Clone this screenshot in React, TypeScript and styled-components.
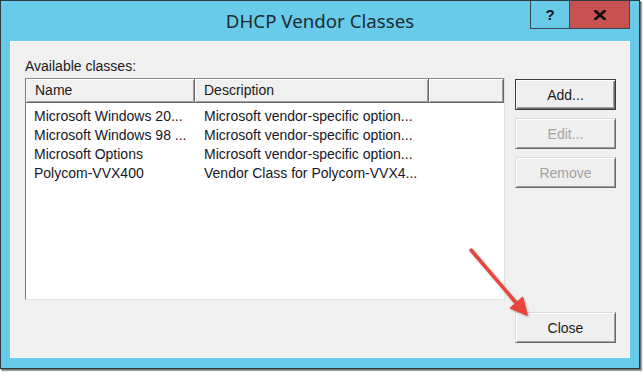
import React from "react";
import styled, { createGlobalStyle } from "styled-components";

const Global = createGlobalStyle`
  html, body { margin: 0; padding: 0; background: #ffffff; }
  body { font-family: "Liberation Sans", Arial, sans-serif; }
`;

const Page = styled.div`
  position: relative;
  width: 644px;
  height: 372px;
  overflow: hidden;
  background: #ffffff;
`;

const Window = styled.div`
  box-sizing: border-box;
  width: 640px;
  height: 369px;
  border: 1px solid #2e3b40;
  box-shadow: 1px 1px 0 #6f6f6f, 2px 2px 1px rgba(0, 0, 0, 0.35);
  background: #68cbe9;
  padding: 0 9px 10px 9px;
  display: flex;
  flex-direction: column;
`;

const TitleBar = styled.div`
  height: 40px;
  display: grid;
  grid-template-columns: 1fr auto 1fr;
  align-items: start;
`;

const Title = styled.div`
  grid-column: 2;
  margin-top: 7px;
  font-family: "Noto Sans", "Segoe UI", sans-serif;
  font-size: 18.7px;
  line-height: 25px;
  color: #1c2b31;
  white-space: nowrap;
`;

const CaptionButtons = styled.div`
  grid-column: 3;
  justify-self: end;
  display: flex;
  margin-top: -1px;
`;

const CaptionButton = styled.div<{ $close?: boolean }>`
  box-sizing: border-box;
  width: ${(p) => (p.$close ? "60px" : "40px")};
  height: 29px;
  background: ${(p) => (p.$close ? "#c75050" : "#68cbe9")};
  border: 1px solid #3a4a50;
  border-left-width: ${(p) => (p.$close ? "0" : "1px")};
  border-top-color: #2e3b40;
  display: flex;
  align-items: center;
  justify-content: center;
  font-family: "Liberation Sans", Arial, sans-serif;
  font-weight: bold;
  font-size: 15px;
  color: #111;
`;

const Client = styled.div`
  box-sizing: border-box;
  height: 317px;
  background: #f0f0f0;
  border: 1px solid #fafafa;
  padding: 16px 13px 14px 14px;
  display: grid;
  grid-template-columns: 480px 101px;
  grid-template-rows: 16px 1fr;
  column-gap: 10px;
  row-gap: 4px;
`;

const Label = styled.div`
  grid-column: 1 / span 2;
  font-size: 14px;
  line-height: 16px;
  color: #1a1a1a;
`;

const ListView = styled.div`
  box-sizing: border-box;
  height: 222px;
  background: #ffffff;
  border-style: solid;
  border-width: 1px;
  border-color: #8a8a8a #e3e3e3 #e3e3e3 #7a7a7a;
  overflow: hidden;
`;

const HeaderRow = styled.div`
  display: flex;
  height: 24px;
`;

const HeaderCell = styled.div<{ $w?: number }>`
  box-sizing: border-box;
  ${(p) => (p.$w ? `width: ${p.$w}px;` : "flex: 1;")}
  height: 24px;
  background: #f0f0f0;
  border-right: 1px solid #696969;
  border-bottom: 1px solid #696969;
  box-shadow: inset 1px 1px 0 #ffffff, inset -1px -1px 0 #a0a0a0;
  padding: 3px 0 0 9px;
  font-size: 14px;
  line-height: 17px;
  color: #1a1a1a;
  white-space: nowrap;
  overflow: hidden;
`;

const Rows = styled.div`
  padding-top: 4px;
`;

const Row = styled.div`
  display: flex;
  height: 19px;
  font-size: 14px;
  line-height: 19px;
  color: #161626;
  white-space: nowrap;
`;

const Cell = styled.div<{ $w: number; $pad: number }>`
  box-sizing: border-box;
  width: ${(p) => p.$w}px;
  padding-left: ${(p) => p.$pad}px;
  overflow: hidden;
`;

const ButtonColumn = styled.div`
  display: flex;
  flex-direction: column;
  gap: 8px;
  padding-top: 1px;
`;

const Button = styled.div<{ $default?: boolean; $disabled?: boolean }>`
  box-sizing: border-box;
  height: 31px;
  width: 101px;
  background: #efefef;
  border: 1px solid ${(p) => (p.$default ? "#3c3c3c" : "#dcdcdc")};
  border-right-color: ${(p) => (p.$default ? "#3c3c3c" : "#696969")};
  border-bottom-color: ${(p) => (p.$default ? "#3c3c3c" : "#696969")};
  box-shadow: ${(p) =>
    p.$default
      ? "inset 1px 1px 0 #ffffff, inset -1px -1px 0 #696969, inset -2px -2px 0 #a0a0a0"
      : "inset 1px 1px 0 #ffffff, inset -1px -1px 0 #a0a0a0"};
  display: flex;
  align-items: center;
  justify-content: center;
  font-size: 14px;
  color: ${(p) => (p.$disabled ? "#a3a3a3" : "#1a1a1a")};
`;

const CloseButton = styled(Button)`
  margin-top: auto;
  height: 31px;
`;

const ArrowSvg = styled.svg`
  position: absolute;
  left: 0;
  top: 0;
  pointer-events: none;
  filter: drop-shadow(1px 1px 1px rgba(0, 0, 0, 0.3));
`;

const rows = [
  ["Microsoft Windows 20...", "Microsoft vendor-specific option..."],
  ["Microsoft Windows 98 ...", "Microsoft vendor-specific option..."],
  ["Microsoft Options", "Microsoft vendor-specific option..."],
  ["Polycom-VVX400", "Vendor Class for Polycom-VVX4..."],
];

export default function App() {
  return (
    <Page>
      <Global />
      <Window>
        <TitleBar>
          <Title>DHCP Vendor Classes</Title>
          <CaptionButtons>
            <CaptionButton>?</CaptionButton>
            <CaptionButton $close>
              <svg width="12" height="10" viewBox="0 0 12 10">
                <path d="M1.5 1 L10.5 9 M10.5 1 L1.5 9" stroke="#111" strokeWidth="2.6" strokeLinecap="square" />
              </svg>
            </CaptionButton>
          </CaptionButtons>
        </TitleBar>
        <Client>
          <Label>Available classes:</Label>
          <ListView>
            <HeaderRow>
              <HeaderCell $w={169}>Name</HeaderCell>
              <HeaderCell $w={234}>Description</HeaderCell>
              <HeaderCell />
            </HeaderRow>
            <Rows>
              {rows.map(([n, d]) => (
                <Row key={n}>
                  <Cell $w={169} $pad={8}>{n}</Cell>
                  <Cell $w={234} $pad={9}>{d}</Cell>
                </Row>
              ))}
            </Rows>
          </ListView>
          <ButtonColumn>
            <Button $default>Add...</Button>
            <Button $disabled>Edit...</Button>
            <Button $disabled>Remove</Button>
            <CloseButton>Close</CloseButton>
          </ButtonColumn>
        </Client>
      </Window>
      <ArrowSvg width="644" height="372" viewBox="0 0 644 372">
        <line x1="471" y1="250" x2="518" y2="305" stroke="#e8453c" strokeWidth="3.5" strokeLinecap="round" />
        <polygon points="527,315 510.5,308 522.5,297.5" fill="#e8453c" stroke="#e8453c" strokeWidth="1.5" strokeLinejoin="round" />
      </ArrowSvg>
    </Page>
  );
}
